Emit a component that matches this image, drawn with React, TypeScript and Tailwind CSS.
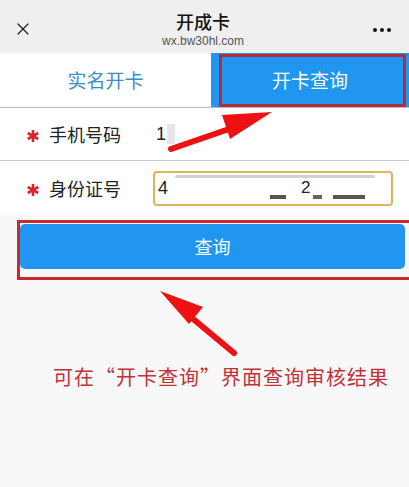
import { X } from "lucide-react";

const cjk = { fontFamily: '"Noto Sans CJK SC", "Noto Sans", sans-serif' };
const latin = { fontFamily: '"Liberation Sans", Arial, sans-serif' };

function Star() {
  return (
    <svg width="12" height="12" viewBox="0 0 12 12" className="mr-[10px] mt-[3px]">
      <g stroke="#d9262c" strokeWidth="2.6" strokeLinecap="butt">
        <line x1="6" y1="0" x2="6" y2="12" />
        <line x1="0.8" y1="3" x2="11.2" y2="9" />
        <line x1="0.8" y1="9" x2="11.2" y2="3" />
      </g>
    </svg>
  );
}

export default function App() {
  return (
    <div className="relative w-[409px] h-[487px] overflow-hidden bg-[#f8f8f8]" style={cjk}>
      {/* 顶部标题栏 */}
      <div className="h-[53px] bg-[#efefef] flex items-center px-[13px]">
        <X className="w-[20px] h-[20px] text-[#222] mt-[5px]" strokeWidth={1.5} />
        <div className="flex-1 flex flex-col items-center leading-none pt-[6px]">
          <div className="text-[18px] text-[#111] font-medium">开成卡</div>
          <div className="text-[12px] text-[#555] mt-[5px]" style={latin}>
            wx.bw30hl.com
          </div>
        </div>
        <div className="flex gap-[3px] pr-[5px] pt-[6px]">
          <span className="w-[4px] h-[4px] rounded-full bg-[#111]" />
          <span className="w-[4px] h-[4px] rounded-full bg-[#111]" />
          <span className="w-[4px] h-[4px] rounded-full bg-[#111]" />
        </div>
      </div>

      {/* 标签页 */}
      <div className="flex h-[55px] bg-white border-b border-[#bbb]">
        <div className="w-[211px] flex items-center justify-center text-[19px] text-[#3a8fcb]">实名开卡</div>
        <div className="flex-1 flex items-center justify-center text-[19px] text-white bg-[#2196f0]">开卡查询</div>
      </div>

      {/* 表单 */}
      <div className="bg-white">
        <div className="h-[53px] flex items-center border-b border-[#c8c8c8] pl-[27px]">
          <Star />
          <span className="text-[18px] text-[#222] w-[107px]">手机号码</span>
          <span className="text-[18px] text-[#222]" style={latin}>1</span>
          <span className="w-[8px] h-[20px] bg-[#e6e6e6] ml-[1px]" />
        </div>
        <div className="h-[54px] flex items-center pl-[27px]">
          <Star />
          <span className="text-[18px] text-[#222] w-[104px]">身份证号</span>
          <div className="relative w-[240px] h-[35px] border-2 border-[#e0b45a] rounded-[4px] flex items-center px-[3px]">
            <span className="text-[18px] text-[#222]" style={latin}>4</span>
            <div className="absolute left-[20px] top-[2px] w-[200px] h-[3px] bg-[#bdbdbd] rounded-full opacity-70" />
            <div className="absolute left-[115px] top-[22px] w-[16px] h-[4px] bg-[#555]" />
            <div className="absolute left-[146px] top-[6px] text-[17px] text-[#222] leading-none" style={latin}>2</div>
            <div className="absolute left-[158px] top-[22px] w-[9px] h-[4px] bg-[#666]" />
            <div className="absolute left-[178px] top-[22px] w-[32px] h-[4px] bg-[#555]" />
          </div>
        </div>
      </div>

      {/* 查询按钮 */}
      <div className="pt-[9px] pl-[20px] pr-[4px]">
        <div className="h-[45px] rounded-[5px] bg-[#2196f0] flex items-center justify-center text-[18px] text-white">查询</div>
      </div>

      {/* 提示文字 */}
      <div className="mt-[93px] pl-[53px] text-[20px] text-[#c2303a] tracking-[1px]">
        可在“开卡查询”界面查询审核结果
      </div>

      {/* 红框标注 */}
      <div className="absolute left-[219px] top-[54px] w-[187px] h-[53px] border-[3px] border-[#b82a3a]" />
      <div className="absolute left-[17px] top-[220px] w-[400px] h-[60px] border-[3px] border-[#c72a2a]" />

      {/* 红色箭头 */}
      <svg className="absolute left-0 top-0 pointer-events-none" width="409" height="487">
        <line x1="171" y1="149" x2="232" y2="128" stroke="#ee1111" strokeWidth="6" strokeLinecap="round" />
        <polygon points="272,112 222,115 230,139" fill="#ee1111" />
        <line x1="234" y1="353" x2="192" y2="318" stroke="#ee1111" strokeWidth="6" strokeLinecap="round" />
        <polygon points="160,291 203,307 189,324" fill="#ee1111" />
      </svg>
    </div>
  );
}
